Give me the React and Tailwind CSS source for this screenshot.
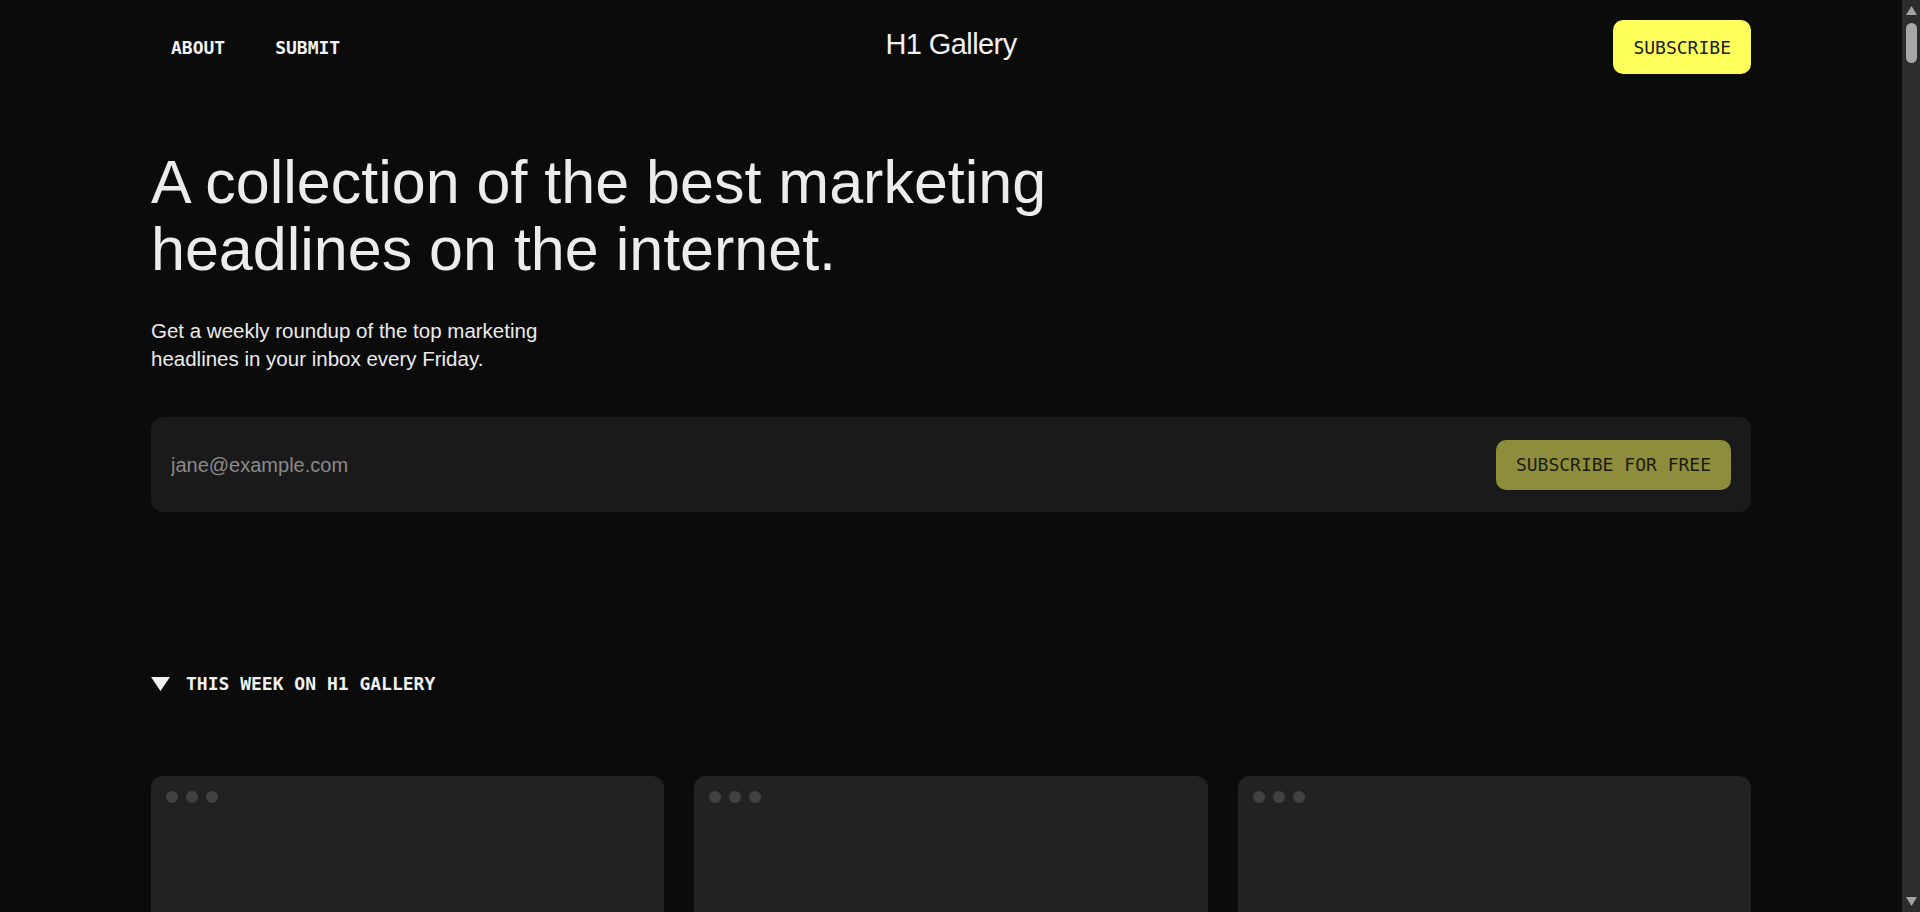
import React from 'react';

const Card = () => (
  <div className="h-[420px] rounded-[12px] bg-[#222222] p-[15px]">
    <div className="flex gap-2">
      <span className="h-3 w-3 rounded-full bg-[#414141]" />
      <span className="h-3 w-3 rounded-full bg-[#414141]" />
      <span className="h-3 w-3 rounded-full bg-[#414141]" />
    </div>
  </div>
);

// classic window scrollbar, drawn over the right edge
const Scrollbar = () => (
  <div className="fixed right-0 top-0 flex h-screen w-[18px] flex-col items-center justify-between bg-[#2c2c2c] py-[6px]">
    <div className="flex flex-col items-center gap-[8px]">
      <svg width="11" height="9" viewBox="0 0 11 9">
        <path d="M5.5 0 L11 9 H0 Z" fill="#a3a3a3" />
      </svg>
      <div className="h-[40px] w-[11px] rounded-full bg-[#a8a8a8]" />
    </div>
    <svg width="11" height="9" viewBox="0 0 11 9">
      <path d="M0 0 H11 L5.5 9 Z" fill="#a3a3a3" />
    </svg>
  </div>
);

const App = () => {
  return (
    <div className="min-h-screen bg-[#0b0b0b] font-['Liberation_Sans',Arial,sans-serif] text-[#ececec]">
      <div className="mr-[18px] pb-24">
        <div className="mx-auto max-w-[1600px]">
          {/* Nav */}
          <nav className="grid grid-cols-3 items-center pt-5">
            <div className="flex items-center gap-2.5 font-['DejaVu_Sans_Mono',monospace] text-[18px] font-bold text-[#f2f2f2]">
              <a className="px-5">ABOUT</a>
              <a className="px-5">SUBMIT</a>
            </div>
            <div className="pb-1 text-center text-[29px] tracking-[-0.02em] text-[#f0f0f0]">H1 Gallery</div>
            <div className="flex justify-end">
              <button className="h-[54px] rounded-[10px] bg-[#ffff5c] px-5 font-['DejaVu_Sans_Mono',monospace] text-[18px] text-[#1a1a1a]">
                SUBSCRIBE
              </button>
            </div>
          </nav>

          {/* Hero */}
          <h1 className="mt-[75px] text-[61px] leading-[67px] text-[#ececec]">
            A collection of the best marketing
            <br />
            headlines on the internet.
          </h1>
          <p className="mt-[34px] text-[20.5px] leading-[28px] text-[#ebebeb]">
            Get a weekly roundup of the top marketing
            <br />
            headlines in your inbox every Friday.
          </p>

          {/* Subscribe form */}
          <div className="mt-[44px] flex h-[95px] items-center rounded-[12px] bg-[#1a1a1a] px-5">
            <input
              className="flex-1 bg-transparent text-[20px] text-[#e5e5e5] outline-none placeholder:text-[#8a8a8a]"
              placeholder="jane@example.com"
            />
            <button className="h-[50px] rounded-[10px] bg-[#8d8d3b] px-5 font-['DejaVu_Sans_Mono',monospace] text-[18px] text-[#1c1c12]">
              SUBSCRIBE FOR FREE
            </button>
          </div>

          {/* This week */}
          <div className="mt-[160px] flex items-center gap-4 font-['DejaVu_Sans_Mono',monospace] text-[18px] font-bold leading-[24px] text-[#f0f0f0]">
            <svg width="19" height="14" viewBox="0 0 19 14">
              <path d="M0 0 H19 L9.5 14 Z" fill="#f0f0f0" />
            </svg>
            <span>THIS WEEK ON H1 GALLERY</span>
          </div>

          <div className="mt-[80px] grid grid-cols-3 gap-[30px]">
            <Card />
            <Card />
            <Card />
          </div>
        </div>
      </div>
      <Scrollbar />
    </div>
  );
};

export default App;
